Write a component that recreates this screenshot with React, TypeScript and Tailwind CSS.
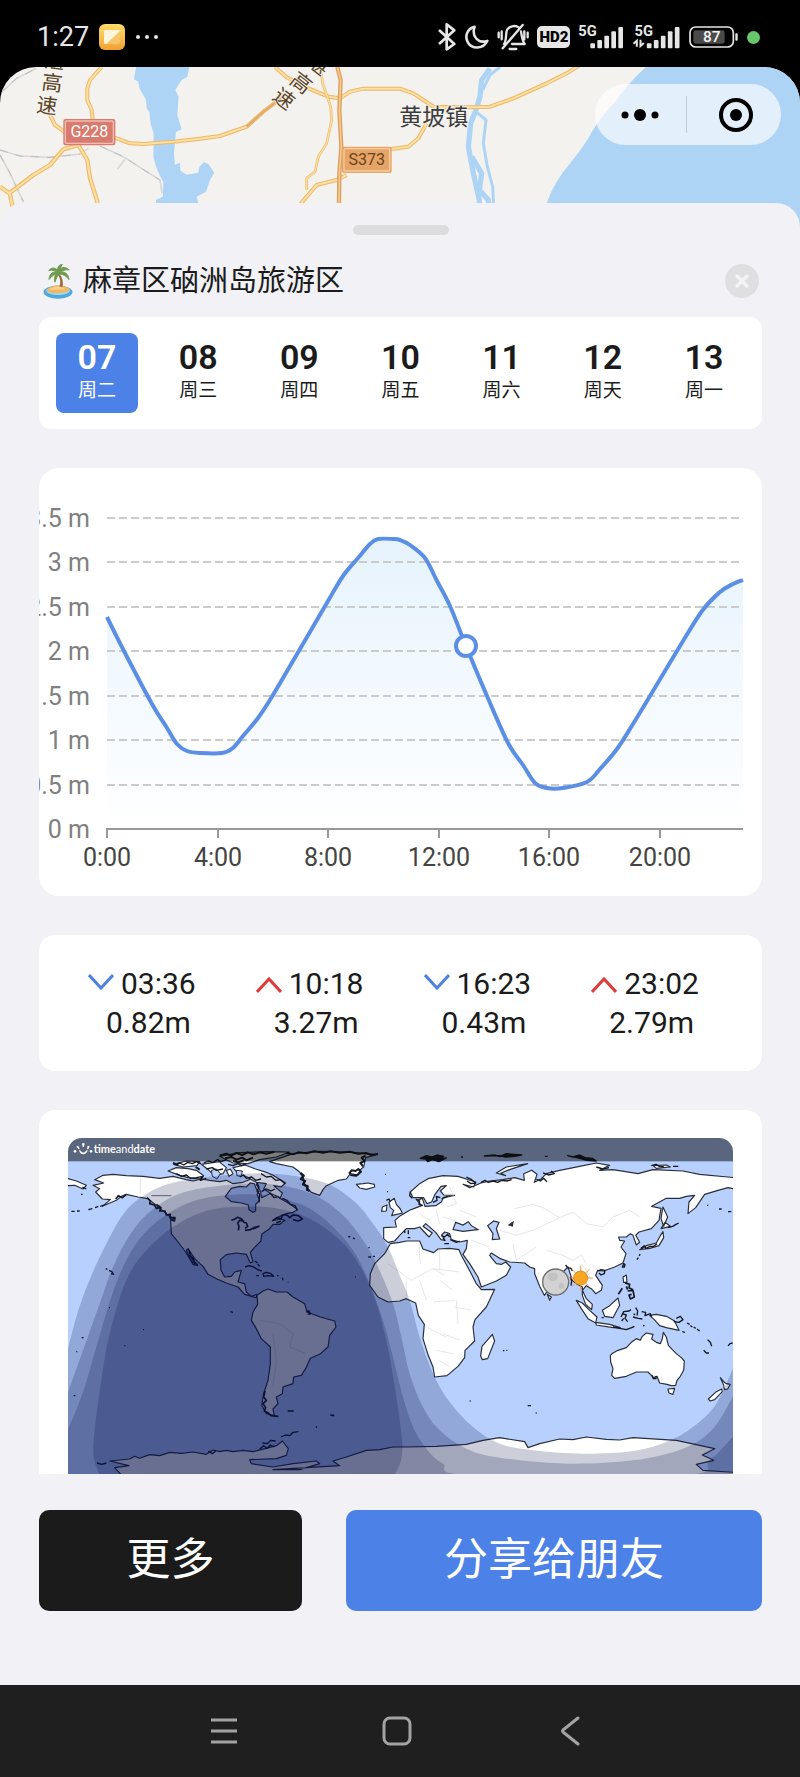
import { useState } from 'react';
import { X } from 'lucide-react';

type Point = [number, number];

const DAYS = [
  { date: '07', week: '周二' },
  { date: '08', week: '周三' },
  { date: '09', week: '周四' },
  { date: '10', week: '周五' },
  { date: '11', week: '周六' },
  { date: '12', week: '周天' },
  { date: '13', week: '周一' },
];

const TIDES = [
  { time: '03:36', height: '0.82m', rising: false },
  { time: '10:18', height: '3.27m', rising: true },
  { time: '16:23', height: '0.43m', rising: false },
  { time: '23:02', height: '2.79m', rising: true },
];

const LEVELS = ['0 m', '0.5 m', '1 m', '1.5 m', '2 m', '2.5 m', '3 m', '3.5 m'];
const HOURS = ['0:00', '4:00', '8:00', '12:00', '16:00', '20:00'];

const TIDE_CURVE: Point[] = [
  [68, 149], [86, 185], [113, 236], [128, 260], [138, 276], [148, 283], [161, 285], [183, 285],
  [194, 280], [204, 268], [219, 250], [234, 227], [261, 181], [289, 133], [304, 108], [319, 90],
  [331, 76], [339, 71], [354, 71], [361, 72], [371, 77], [386, 90], [398, 113], [411, 138],
  [427, 178], [448, 228], [469, 275], [484, 297], [496, 315], [508, 320], [524, 320], [548, 314],
  [561, 301], [578, 281], [594, 256], [614, 223], [638, 183], [663, 143], [681, 124], [694, 116], [704, 112],
];

// Twilight bands, from civil twilight down to full night
const NIGHT_BANDS: Point[][] = [
  [[20, 705], [50, 590], [85, 490], [140, 370], [200, 270], [270, 215], [350, 185], [480, 166], [640, 160], [790, 185], [880, 240], [940, 310], [985, 380], [1020, 465], [1050, 540], [1080, 650], [1120, 760], [1170, 845], [1240, 920], [1320, 970], [1420, 990], [1570, 1000], [1720, 992], [1820, 965], [1900, 920], [1970, 850], [2024, 735]],
  [[20, 830], [70, 690], [120, 550], [160, 440], [210, 345], [270, 275], [360, 220], [500, 194], [640, 192], [760, 222], [850, 285], [910, 360], [955, 440], [1000, 550], [1025, 650], [1050, 760], [1090, 860], [1140, 930], [1220, 985], [1320, 1012], [1520, 1030], [1720, 1020], [1870, 985], [1960, 925], [2024, 820]],
  [[20, 940], [70, 815], [110, 680], [150, 545], [190, 440], [240, 355], [310, 290], [400, 243], [500, 225], [620, 225], [730, 255], [810, 310], [880, 390], [930, 490], [970, 600], [1000, 710], [1030, 830], [1060, 920], [1100, 985], [1150, 1030], [1230, 1064], [1870, 1064], [1950, 1020], [2024, 945]],
  [[120, 1064], [102, 1010], [105, 930], [125, 780], [150, 640], [200, 480], [260, 390], [340, 320], [430, 275], [520, 260], [640, 262], [740, 290], [830, 350], [890, 420], [940, 520], [980, 660], [1010, 830], [1027, 960], [1024, 1020], [1005, 1064]],
];

function smoothPath(points: Point[]) {
  let d = `M${points[0][0]} ${points[0][1]}`;
  for (let i = 0; i < points.length - 1; i++) {
    const p0 = points[i - 1] ?? points[i];
    const p1 = points[i];
    const p2 = points[i + 1];
    const p3 = points[i + 2] ?? p2;
    d += ` C${p1[0] + (p2[0] - p0[0]) / 6} ${p1[1] + (p2[1] - p0[1]) / 6} ${p2[0] - (p3[0] - p1[0]) / 6} ${p2[1] - (p3[1] - p1[1]) / 6} ${p2[0]} ${p2[1]}`;
  }
  return d;
}

function SignalBars() {
  return (
    <g fill="#e6e6e6">
      <rect x="0" y="50" width="14" height="15" rx="3" />
      <rect x="21" y="40" width="14" height="25" rx="3" />
      <rect x="42" y="27" width="14" height="38" rx="3" />
      <rect x="63" y="14" width="14" height="51" rx="3" />
      <rect x="84" y="1" width="14" height="64" rx="3" />
    </g>
  );
}

function StatusBar() {
  return (
    <header className="flex h-[67px] items-center justify-between bg-black pt-[7px] pr-10 pl-[37px] text-[#e6e6e6]">
      <div className="flex items-center gap-[10px]">
        <span className="text-[27px] leading-8">1:27</span>
        <svg viewBox="0 0 26 26" className="size-[26px]">
          <defs>
            <linearGradient id="note" x1="0" y1="0" x2="0" y2="1">
              <stop offset="0" stopColor="#ffdc6a" />
              <stop offset="1" stopColor="#f2a134" />
            </linearGradient>
          </defs>
          <rect width="26" height="26" rx="6" fill="url(#note)" />
          <rect x="5" y="6" width="16" height="14" rx="2" fill="#f8c66a" />
          <path d="M5 7a1 1 0 0 1 1-1h14a1 1 0 0 1 1 1L7 20H6a1 1 0 0 1-1-1z" fill="#fff6dd" />
        </svg>
        <svg viewBox="0 0 24 6" className="h-[6px] w-6" fill="#e6e6e6">
          <circle cx="3" cy="3" r="2" />
          <circle cx="12" cy="3" r="2" />
          <circle cx="21" cy="3" r="2" />
        </svg>
      </div>

      <div className="flex items-center gap-2">
        <svg viewBox="114 66 58 90" className="h-[30px] w-5" fill="none" stroke="#e6e6e6" strokeWidth="8" strokeLinejoin="round">
          <path d="M119 90 L165 132 L142 148 L142 73 L165 91 L119 132" />
        </svg>
        <svg viewBox="200 66 75 90" className="h-[30px] w-6" fill="none" stroke="#e6e6e6" strokeWidth="8" strokeLinejoin="round">
          <path d="M230 79 C207 85 198 108 209 128 C221 150 258 150 270 123 C240 133 220 108 230 79 Z" />
        </svg>
        <svg viewBox="305 66 96 90" className="h-[30px] w-8" fill="none" stroke="#e6e6e6" strokeWidth="7" strokeLinecap="round" strokeLinejoin="round">
          <path d="M326 132 C335 122 330 96 336 88 C345 76 362 76 370 82 M377 94 C380 112 380 120 388 132 H350 M322 145 L382 75 M343 147 H363 M310 98 V112 M319 94 V118 M387 94 V118 M397 98 V112" />
        </svg>
        <svg viewBox="0 0 33 30" className="h-[30px] w-[33px]">
          <rect x="0" y="4" width="33" height="22" rx="5" fill="#e6e6e6" />
          <text x="17" y="20" fontSize="15" fontWeight="900" textAnchor="middle" fill="#000">HD2</text>
        </svg>
        <svg viewBox="534 66 138 90" className="h-[30px] w-[46px]">
          <text x="535" y="107" fontSize="44" fontWeight="700" fill="#e6e6e6">5G</text>
          <g transform="translate(571 80)"><SignalBars /></g>
        </svg>
        <svg viewBox="694 66 146 90" className="h-[30px] w-[49px]">
          <text x="701" y="107" fontSize="44" fontWeight="700" fill="#e6e6e6">5G</text>
          <path d="M708 140 V122 L698 131 M719 119 V138 L729 129" fill="none" stroke="#e6e6e6" strokeWidth="6" />
          <g transform="translate(738 80)"><SignalBars /></g>
        </svg>
        <svg viewBox="866 66 150 90" className="h-[30px] w-[50px]">
          <rect x="869" y="81" width="130" height="60" rx="17" fill="none" stroke="#e6e6e6" strokeWidth="5" />
          <rect x="879" y="91" width="94" height="40" rx="7" fill="#4a4a4a" />
          <rect x="1005" y="100" width="7" height="22" rx="3" fill="#e6e6e6" />
          <text x="934" y="127" fontSize="46" fontWeight="500" textAnchor="middle" fill="#f2f2f2">87</text>
        </svg>
        <span className="size-[13px] rounded-full bg-[#66c76c]" />
      </div>
    </header>
  );
}

function Road({ d, width = 12 }: { d: string; width?: number }) {
  return (
    <>
      <path d={d} fill="none" stroke="#eeb765" strokeWidth={width} strokeLinejoin="round" />
      <path d={d} fill="none" stroke="#fbe0a3" strokeWidth={width / 2} strokeLinejoin="round" />
    </>
  );
}

function AreaMap() {
  return (
    <svg viewBox="0 201 2400 480" preserveAspectRatio="xMidYMin slice" className="h-40 w-full rounded-t-[36px] bg-[#f3f2ee]">
      <g fill="#aed4f5">
        <path d="M408 201 L402 238 415 245 418 265 438 300 440 325 448 335 452 372 461 400 460 470 468 500 480 528 490 545 488 590 468 600 466 700 620 700 590 590 618 575 630 540 643 518 625 492 612 486 598 500 595 518 560 524 541 512 540 488 525 494 522 460 528 396 545 388 532 345 536 290 526 270 545 240 562 230 568 201Z" />
        <path d="M1938 201 C1900 235 1870 270 1845 305 C1810 345 1785 375 1765 415 C1730 470 1700 500 1680 530 C1660 560 1645 590 1630 640 L1620 700 H2400 V201Z" />
      </g>

      {/* River */}
      <g fill="none" stroke="#aed4f5" strokeLinejoin="round">
        <path d="M1470 206 L1445 240 L1440 290 L1428 330 L1412 370 L1405 440 L1420 520 L1438 600 L1440 690" strokeWidth="16" />
        <path d="M1500 201 L1470 225 L1448 270 M1428 335 L1458 360 L1450 430 L1462 500 L1478 560 L1485 690" strokeWidth="9" />
        <path d="M1415 470 L1445 520 L1438 570 L1465 600 L1475 690" strokeWidth="16" />
      </g>

      {/* Railways */}
      <g fill="none" stroke="#d8d8da" strokeWidth="5">
        <path d="M0 280 L50 235 L110 205 M0 450 L60 468 L150 472 L240 462 L265 445 M0 465 L30 520 L70 605 M300 438 L370 470 L440 515 L480 540 L486 580 M375 478 L352 508" />
      </g>
      <g fill="none" stroke="#b9bcc2" strokeWidth="3" strokeDasharray="24 24">
        <path d="M0 280 L50 235 L110 205 M0 450 L60 468 L150 472 L240 462 M0 465 L30 520 L70 605 M300 438 L370 470 L440 515 L480 540" />
      </g>

      <Road d="M305 201 L270 240 L262 265 L262 300 L275 330 L278 360" />
      <Road d="M150 345 L165 375 L200 400 L350 415 L390 430 L430 432 L520 425 L600 416 L660 408 L740 380 L790 335 L850 290" />
      <Road d="M0 560 L28 580 L100 525 L150 495 L190 448 L235 435 L262 480 L270 535 L292 605 L300 700 M28 575 L42 640" width={13} />
      <Road d="M825 201 L860 232 L925 265 L985 290 L1020 295 L1050 275 L1090 266 L1200 266 L1240 280 L1270 300 L1300 320 L1410 322 L1470 320 L1540 295 L1640 250 L1700 220 L1740 195" />
      <Road d="M1280 370 L1255 415 L1225 440 L1170 448" />
      <Road d="M1040 525 L1010 540 L950 555 L920 590 L895 620" />
      <Road d="M960 201 L968 250 L992 320 L995 360 L980 430 L955 470 L945 515 L920 535 L920 570" width={8} />
      <path d="M1012 201 L1022 240 L1018 330 L1024 440 L1018 520 L1016 690" fill="none" stroke="#dca160" strokeWidth="13" />
      <path d="M1012 201 L1022 240 L1018 330 L1024 440 L1018 520 L1016 690" fill="none" stroke="#f4c88e" strokeWidth="5" />
      <path d="M740 380 L790 335 L850 290" fill="none" stroke="#dfa868" strokeWidth="6" />

      <g fontSize="62" fill="#5b4527" stroke="#f3f2ee" strokeWidth="5" paintOrder="stroke" textAnchor="middle">
        <text transform="translate(161 205) rotate(7)">湛</text>
        <text transform="translate(154 271) rotate(7)">高</text>
        <text transform="translate(138 339) rotate(7)">速</text>
        <text transform="translate(942 212) rotate(38)">湛</text>
        <text transform="translate(890 266) rotate(38)">高</text>
        <text transform="translate(838 314) rotate(38)">速</text>
      </g>
      <text x="1198" y="375" fontSize="69" fill="#3c3c3c" stroke="#f3f2ee" strokeWidth="6" paintOrder="stroke">黄坡镇</text>

      <rect x="190" y="357" width="156" height="79" rx="6" fill="#d97a6e" />
      <rect x="196" y="363" width="144" height="67" rx="3" fill="none" stroke="#f1beb4" strokeWidth="4" />
      <text x="268" y="412" fontSize="48" textAnchor="middle" fill="#fff">G228</text>
      <rect x="1026" y="440" width="149" height="79" rx="6" fill="#e5a468" />
      <rect x="1032" y="446" width="137" height="67" rx="3" fill="none" stroke="#f5cd9c" strokeWidth="4" />
      <text x="1100" y="496" fontSize="48" textAnchor="middle" fill="#6c4316">S373</text>
    </svg>
  );
}

function Capsule() {
  return (
    <div className="absolute top-[17px] right-[19px] flex h-[61px] w-[186px] items-center rounded-full bg-white/65">
      <button aria-label="更多操作" className="flex flex-1 items-center justify-center">
        <svg viewBox="0 0 38 12" className="h-3 w-[38px]">
          <circle cx="4" cy="6" r="3.5" />
          <circle cx="19" cy="6" r="6" />
          <circle cx="34" cy="6" r="3.5" />
        </svg>
      </button>
      <span className="h-[37px] w-px bg-black/15" />
      <button aria-label="关闭小程序" className="flex flex-1 items-center justify-center pl-1">
        <svg viewBox="0 0 36 36" className="size-9">
          <circle cx="18" cy="18" r="15" fill="none" stroke="#000" strokeWidth="4" />
          <circle cx="18" cy="18" r="6" />
        </svg>
      </button>
    </div>
  );
}

function IslandIcon() {
  return (
    <svg viewBox="130 135 90 106" className="h-[35px] w-[30px] shrink-0">
      <ellipse cx="175" cy="220" rx="44" ry="20" fill="#4fa9dc" />
      <ellipse cx="175" cy="216" rx="36" ry="13" fill="#9bdcf0" />
      <path d="M140 215 C155 195 200 193 212 214 C200 226 152 227 140 215Z" fill="#f2b765" />
      <path d="M148 213 C165 200 185 200 196 212Z" fill="#f9cf86" />
      <path d="M176 160 C187 172 192 188 189 204 L180 204 C184 188 181 174 172 164Z" fill="#9a6a3d" />
      <path d="M178 160 C170 145 156 143 147 155 C158 152 167 155 176 162Z M178 160 C162 155 148 164 148 182 C156 170 166 165 178 164Z M178 160 C180 145 195 140 209 153 C197 151 188 154 179 163Z M178 160 C194 156 207 164 208 182 C200 170 190 166 178 165Z M174 158 C172 145 178 137 188 136 C182 144 182 152 180 162Z M176 160 C165 166 162 178 166 190 C169 178 174 171 180 164Z" fill="#6f9c4e" stroke="#6f9c4e" strokeWidth="3" />
    </svg>
  );
}

function TideChart() {
  const curve = smoothPath(TIDE_CURVE);
  return (
    <svg viewBox="0 0 723 428" className="block w-full" role="img" aria-label="潮汐曲线">
      <defs>
        <linearGradient id="tide" x1="0" y1="0" x2="0" y2="1">
          <stop offset="0" stopColor="#e6f3fd" />
          <stop offset="1" stopColor="#ffffff" />
        </linearGradient>
      </defs>
      <path d={`${curve} L704 361 L68 361Z`} fill="url(#tide)" />
      {LEVELS.map((label, i) => {
        const y = Math.round(361 - (i * 311) / 7);
        return (
          <g key={label}>
            {i > 0 && <line x1="68" x2="704" y1={y} y2={y} stroke="#cbcbcb" strokeWidth="2" strokeDasharray="8 4" />}
            <text x="51" y={y + 9} fontSize="25" textAnchor="end" fill="#808080">{label}</text>
          </g>
        );
      })}
      <line x1="67" x2="704" y1="361" y2="361" stroke="#999" strokeWidth="2" />
      {HOURS.map((label, i) => {
        const x = Math.round(68 + i * 110.6);
        return (
          <g key={label}>
            <line x1={x} x2={x} y1="361" y2="370" stroke="#999" strokeWidth="2" />
            <text x={x} y="398" fontSize="25" textAnchor="middle" fill="#444">{label}</text>
          </g>
        );
      })}
      <path d={curve} fill="none" stroke="#5b8fe6" strokeWidth="4" strokeLinejoin="round" />
      <circle cx="427" cy="178" r="10" fill="#fff" stroke="#5b8fe6" strokeWidth="4" />
    </svg>
  );
}

function WorldMap() {
  return (
    <svg viewBox="25 53 1995 1007" className="block w-full rounded-t-[14px]" role="img" aria-label="昼夜分布图">
      <rect x="20" y="50" width="2010" height="1020" fill="#b7d0fd" />

      <g fill="#fff" stroke="#2a2e38" strokeWidth="3.5" strokeLinejoin="round">
        {/* North America */}
        <path d="M105 178 L130 165 160 162 200 166 250 168 300 174 340 168 380 178 400 182 425 176 450 180 480 184 500 180 520 190 550 186 575 176 600 180 590 192 602 212 606 232 628 222 640 208 660 234 690 250 714 268 700 276 680 280 655 290 638 302 662 296 676 300 660 312 640 312 630 325 606 342 604 362 582 384 572 396 580 425 572 428 560 402 530 398 500 403 482 418 484 450 495 470 515 468 525 455 545 450 535 485 555 490 560 515 575 528 592 522 590 532 575 528 555 522 535 500 500 488 470 475 445 462 430 438 405 415 385 385 380 390 398 425 414 436 400 432 378 395 355 365 335 340 333 300 342 296 320 280 290 255 265 235 235 230 200 222 185 228 170 240 128 258 152 238 128 236 108 215 120 205 100 195 132 188Z" />
        <path d="M325 152 L350 142 385 145 410 150 432 166 420 176 385 172 360 165Z M342 132 L380 122 420 124 412 136 370 140Z M425 132 L478 124 500 142 490 160 465 166 448 150Z M500 150 L512 146 520 160 508 168Z M520 142 L556 134 588 146 620 156 640 165 678 188 664 200 642 196 668 218 662 232 635 220 612 206 620 190 590 186 562 170 535 160Z M480 108 L540 97 620 94 690 95 650 110 600 118 565 130 520 128 500 118Z" />
        <path d="M630 124 L700 100 780 93 860 95 950 103 918 112 912 140 902 148 895 164 872 160 860 176 836 180 800 196 790 208 780 225 755 216 740 200 735 190 730 170 720 155 700 140 650 130Z" />
        <path d="M890 192 L910 190 925 188 944 192 945 200 920 207 900 203Z M25 175 L50 182 80 195 70 206 45 195 25 196" />
        {/* South America */}
        <path d="M592 525 L610 512 625 506 650 515 682 515 700 530 735 550 742 575 782 590 825 602 829 620 810 645 805 680 780 702 752 714 738 745 725 765 702 770 700 790 670 800 668 820 650 830 655 850 640 866 644 886 620 880 606 855 612 820 625 780 632 730 632 680 605 655 590 625 575 600 580 575 594 552Z" />
        {/* Africa */}
        <path d="M992 370 L975 400 945 430 932 460 930 495 955 530 985 545 1020 542 1040 535 1068 548 1076 585 1094 612 1090 655 1104 700 1120 740 1125 770 1162 766 1195 738 1215 712 1216 690 1245 662 1240 620 1246 598 1280 560 1305 507 1265 508 1250 490 1232 455 1205 405 1198 388 1170 384 1135 386 1122 397 1090 386 1080 362 1040 362 1020 366Z" />
        {/* Antarctica */}
        <path d="M185 1064 L165 1042 208 1036 150 1022 210 1016 225 1008 240 1014 270 1003 300 1006 330 996 365 999 400 995 440 1002 460 989 480 994 500 990 520 994 550 990 580 994 620 984 652 975 668 962 686 985 680 1005 650 1015 570 1018 575 1030 640 1040 700 1030 770 1022 780 1030 720 1048 640 1048 840 1036 820 1022 860 1010 920 990 960 988 1000 980 1040 980 1130 978 1220 972 1270 960 1320 952 1395 964 1405 982 1440 970 1500 956 1540 958 1580 950 1640 957 1680 959 1720 952 1850 960 1920 975 1965 985 1928 1004 1962 1020 1910 1032 1930 1050 2024 1056 2024 1074 185 1074Z" />
      </g>

      {/* Inner borders drawn thin */}
      <path d="M242 172 V220 M600 600 L660 610 700 640 690 680 740 700 M640 640 L650 720 640 800" fill="none" stroke="#d9d9dd" strokeWidth="2" />
      <path d="M275 226 H335" stroke="#2a2e38" strokeWidth="2" />

      {/* Hudson Bay and the Great Lakes */}
      <path d="M497 228 L515 204 540 198 560 200 572 188 584 190 590 206 598 214 592 222 600 240 588 252 588 272 580 276 568 268 566 254 545 248 515 244Z" fill="#b7d0fd" stroke="#2a2e38" strokeWidth="3.5" />
      <path d="M455 150 L470 146 482 160 472 176 458 168Z M530 150 L548 152 545 168 532 166Z" fill="#b7d0fd" stroke="#2a2e38" strokeWidth="3" />
      <path d="M515 300 L526 296 534 291 545 295 551 302 540 300 534 308 538 318 536 330 M550 305 L560 308 564 318 556 324 M556 330 L572 328 582 322 598 318 580 326" fill="none" stroke="#1c2028" strokeWidth="5" strokeLinejoin="round" />

      <g transform="translate(1020 0)">
        <g fill="#fff" stroke="#2a2e38" strokeWidth="3.5" strokeLinejoin="round">
          {/* Eurasia */}
          <path d="M-48 322 L-10 320 -14 300 2 286 30 270 50 262 66 256 52 240 68 234 76 258 108 256 126 244 130 232 165 225 132 224 122 212 140 196 124 198 106 222 96 245 82 250 72 232 40 232 32 215 60 190 85 175 130 166 175 168 228 185 222 200 190 192 210 202 244 188 270 182 310 178 345 172 374 180 372 160 396 150 412 162 404 186 424 176 440 160 480 150 540 138 590 128 630 135 600 150 640 148 715 160 760 148 850 152 900 162 1004 172 1004 206 985 202 955 210 915 222 888 262 865 280 868 245 885 225 860 228 840 234 800 234 756 258 784 264 778 300 755 325 718 335 708 345 720 366 710 374 700 345 692 340 680 350 657 350 660 360 675 362 664 380 679 400 670 428 645 440 612 452 594 450 588 465 608 495 605 510 588 520 575 505 560 496 548 510 560 535 578 552 576 568 558 552 548 525 548 500 530 490 518 480 505 440 490 455 460 480 445 510 434 525 420 498 405 460 405 445 390 440 375 428 330 425 300 414 275 398 270 405 290 430 306 432 318 425 333 440 320 465 290 482 245 500 235 470 210 430 190 402 200 385 203 360 180 365 155 358 150 340 135 335 126 344 136 360 124 358 108 336 92 322 78 310 70 318 98 338 88 350 60 320 45 325 20 325 0 345 -15 362 -35 366 -48 355Z" />
          <path d="M-32 246 L-16 234 -10 252 2 266 8 278 -24 286 -18 270 -28 262Z M-52 260 L-38 254 -40 272 -54 273Z" />
          <path d="M290 158 L320 140 384 130 330 148 304 158 318 166Z M760 136 L800 134 812 140 770 144Z" />
          <path d="M278 642 L285 662 264 715 248 718 243 706 247 678Z M443 522 L455 530 450 540Z" />
          {/* Australia and New Zealand */}
          <path d="M632 705 L640 698 655 690 680 682 695 666 710 655 722 660 728 648 740 638 760 642 756 656 770 666 782 670 788 655 791 636 800 650 806 675 818 688 830 700 845 712 854 722 852 750 842 768 832 780 828 795 815 796 802 792 780 788 772 768 762 772 745 755 710 755 680 768 645 774 636 765 640 745 633 725Z" />
          <path d="M805 806 L825 804 820 822 808 818Z M962 772 L974 786 980 790 992 792 984 806 974 808 972 794Z M926 836 L950 814 966 806 968 814 945 838 932 842Z" />
          {/* South-east Asia and Japan */}
          <path d="M530 540 L548 548 570 570 592 590 588 608 565 595 545 565Z M588 606 L630 612 662 622 640 622 590 614Z M608 570 L630 556 655 533 660 555 640 592 615 588Z M750 585 L770 582 800 588 825 602 838 630 800 622 780 616 764 598Z M670 470 L680 464 682 486 672 486Z M720 388 L740 376 770 368 782 346 790 334 792 352 778 376 750 384Z M784 325 L796 306 812 318Z M790 260 L804 290 792 318 784 294Z" />
        </g>
        <g fill="#b7d0fd" stroke="#2a2e38" strokeWidth="3.5">
          <path d="M160 328 L168 306 190 314 206 304 215 316 235 328 190 333Z M264 316 L282 302 298 306 290 325 300 356 278 358 280 340Z" />
          <path d="M328 314 L340 305 338 317Z" fill="#2a2e38" />
        </g>
        <path d="M-35 430 L35 480 100 445 135 465 M58 375 L62 430 M100 445 L180 455 M120 390 V450 M20 480 V530 M120 480 L160 510 M60 480 L80 540 M100 545 L165 540 M170 540 L175 610 M165 560 L215 570 M130 640 L180 660 M80 620 L140 650 M110 690 L160 700 M118 720 L150 740 M215 360 L270 380 M345 265 L400 252 430 262 480 292 520 275 560 310 610 320 640 290 690 270 720 290 M300 330 L350 345 400 330 480 292 M340 370 L350 420 410 380 M440 390 L490 405 520 420 545 405 560 430 M545 430 L560 450 575 480 M110 270 L120 310 M60 280 L90 300 M140 260 L170 250 150 200 M180 270 L230 290 M130 290 L165 300" fill="none" stroke="#d9d9dd" strokeWidth="2" />

        {/* Small islands and rugged coasts */}
        <g fill="none" stroke="#15181f" strokeWidth="4" strokeLinejoin="round">
          <path d="M62 114 L80 106 96 110 112 104 132 108 120 116 140 113 118 124 98 118 84 124 78 116Z M254 107 L285 104 300 109 320 100 345 102 366 104 340 109 318 110 300 106 Z M504 106 L520 110 540 104 556 112 578 114 590 122 562 120 540 114Z" fill="#15181f" />
          <path d="M184 110 h6 M436 108 h8 M200 170 l16 8 12 10 -14 2 -12 -8 M244 186 l12 -6 10 6 14 -4 14 4 12 -6 16 2 14 -4 M410 176 l12 6 10 -8 10 10 M430 158 l16 6 18 -4 -10 -8 M590 140 l20 6 18 -4 M755 136 l14 -4 10 6 14 2 M820 138 h16" />
          <path d="M664 590 L672 574 688 572 694 568 M668 580 L680 584 676 594 684 604 M666 602 L672 594 M708 562 L714 572 712 586 M702 580 L706 584 M726 574 L738 576 736 586 752 580 756 590 M700 590 L716 594 728 596 M640 620 L660 624 680 628 696 622 704 618 M606 592 h6 M730 616 h5" />
          <path d="M676 488 L690 492 688 502 700 508 M680 498 L684 508 M656 522 L668 504 M684 512 L700 510 704 530 692 536 688 524 696 522" strokeWidth="5" />
          <path d="M830 594 L842 588 850 598 838 606 822 604 M862 608 l8 4 M872 616 l6 4 M882 620 l6 4 M892 626 l8 6 M924 658 l8 8 4 12 M912 690 l8 8 8 0 M985 676 l6 -6 8 -2 M848 634 l8 2 M805 322 l14 -4 10 -6 8 -4 M596 452 l8 -4 12 2 -2 10 -10 4 -6 -6 M668 440 l4 -10 4 2 -2 8 Z M712 418 l4 -6 M718 406 l4 -4 M384 856 h10 M408 878 h3 M210 842 h3 M310 692 l4 -2 M320 690 h3 M498 434 l6 8 10 2 4 8 M512 470 l4 12 -2 14 M757 765 l4 10 8 0 0 -8 M724 384 l10 -8 4 8 14 -6 10 0 10 -8 M922 255 h4 M958 266 h8 M985 274 h10" />
          <path d="M32 214 L30 226 38 234 M48 236 L60 242 58 252 70 256 M100 246 L112 240 110 228 122 232 M126 236 L144 228 M125 346 L134 350 144 342 150 350 M130 352 L136 362 M134 370 h14 M152 358 L170 366 180 362 M15 328 v10 M26 330 v12 M24 352 h8 M-40 240 L-32 236 -28 244" />
        </g>
      </g>

      <g fill="none" stroke="#15181f" strokeWidth="4" strokeLinejoin="round">
        <path d="M35 273 h10 M52 272 h8 M86 268 l12 -3 M106 262 l10 -4 M122 258 l10 -4 M64 222 h5 M68 200 l12 6" />
        <path d="M168 236 L176 226 188 232 200 222 M262 232 L272 242 270 250 284 254 290 264 300 262 M290 252 L304 262 300 272 316 272 320 284 332 282 330 292 346 292 344 302 332 296" strokeWidth="5" />
        <path d="M385 386 L392 398 390 406 402 414 404 424 414 434 M388 394 L396 412 406 430" />
        {/* Arctic archipelago */}
        <path d="M345 132 L360 128 372 134 384 126 398 130 410 124 424 130 M350 160 L366 168 380 164 392 174 410 172 430 168 422 180 440 174 M432 128 L446 122 460 126 474 118 484 124 500 118 M440 146 L458 142 470 150 490 146 M505 132 L520 136 534 130 546 136 560 130 M540 170 L552 164 560 174 576 170 588 180 604 176 M604 160 L620 170 634 168 648 180 662 178 676 190" />
        <path d="M480 106 L500 100 514 106 530 98 548 104 564 96 582 102 600 96 620 100 644 94 M496 114 L516 110 530 118 548 112 560 120 580 112 M520 122 L536 126 552 120 M340 128 L356 134 M408 140 L420 148" strokeWidth="6" />
        <path d="M680 98 L700 102 716 96 740 99 764 93 790 97 812 93 840 97 870 94 896 100 918 98 936 104 955 101 M918 106 L906 112 914 122 902 128 910 138 M868 160 L876 150 888 152 896 146 904 154 890 166 872 164" strokeWidth="6" />
        <path d="M722 158 L732 166 724 176 736 182 730 192 744 198 742 208 750 212" strokeWidth="7" />
        <path d="M592 188 L598 200 592 212 600 222 598 246 M606 214 L618 206 634 212 646 206 M630 218 L644 232 656 228 M668 234 L682 240 692 252 706 256 712 268" />
        <path d="M640 300 L652 292 664 296 668 284 682 284 690 292 700 284 716 286 728 296 716 302 700 298 M650 308 L664 302" strokeWidth="5" />
        {/* Caribbean */}
        <path d="M556 440 L568 436 582 440 594 448 606 452 M610 460 L620 456 634 460 642 468 626 466 612 468Z M590 466 h8 M652 466 h5 M586 422 l8 6 M594 432 l6 6 M668 472 l2 8 M684 486 h2" />
        <path d="M138 446 h5 M148 450 l8 4 6 8 -8 -2 M512 574 l8 2 M148 562 h3 M66 652 h6 M50 694 h3 M42 826 h5 M250 628 h3 M194 676 h3 M976 162 h3 M982 214 h3 M866 350 l6 -2 M880 352 l5 4 M926 382 h4 M926 410 h8 M940 408 h6 M886 470 h2 M740 575 l8 -4 4 10 -8 0" />
        {/* Tierra del Fuego and the Antarctic Peninsula */}
        <path d="M616 812 L612 830 620 840 610 850 618 862 614 872 626 878 634 886 656 888 M684 872 h18 M812 884 l12 2 M768 920 h4" strokeWidth="5" />
        <path d="M600 986 L612 976 622 984 632 974 644 980 M608 968 L622 970 634 960 648 962 M664 950 L678 944 690 946 700 936 716 934 M112 1028 L126 1032 140 1028 M446 992 l12 8 10 -8" strokeWidth="4" />
      </g>

      {NIGHT_BANDS.map((band, i) => (
        <path key={i} d={`${smoothPath(band)} ${i < 3 ? 'V1070 H20' : ''}Z`} fill="#070d4b" fillOpacity="0.205" />
      ))}

      {/* Moon and sun */}
      <circle cx="1488" cy="485" r="39" fill="#d2d2d2" stroke="#6d6d6d" strokeWidth="4" />
      <path d="M1462 468 C1475 450 1498 455 1494 472 C1488 486 1468 486 1462 468Z M1498 490 C1508 480 1518 492 1510 504 C1498 508 1494 500 1498 490Z" fill="#c2c2c2" />
      <path d="M1563 436 V510 M1526 473 H1600 M1537 447 L1589 499 M1589 447 L1537 499" stroke="#ef9a5c" strokeWidth="3" />
      <circle cx="1563" cy="473" r="21" fill="#f7a823" stroke="#e58a1e" strokeWidth="3" />

      {/* Attribution bar */}
      <rect x="20" y="50" width="2010" height="73" fill="#05070c" fillOpacity="0.53" />
      <g fill="#fff">
        <path d="M58 88 C60 106 82 106 84 88 L78 92 C76 98 66 98 64 92Z" />
        <circle cx="46" cy="93" r="4" />
        <path d="M50 78 L56 76 60 86 56 86Z M67 69 H75 L73 80 H69Z M84 76 L90 78 86 87 82 86Z" />
        <circle cx="94" cy="93" r="4" />
        <text x="102" y="97" fontSize="33" className="font-[family-name:Lato,sans-serif]">
          <tspan fontWeight="700">time</tspan>
          <tspan fontWeight="400">and</tspan>
          <tspan fontWeight="700">date</tspan>
        </text>
      </g>
    </svg>
  );
}

function NavBar() {
  return (
    <nav className="flex h-[92px] items-center justify-center gap-[144px] bg-[#1f1f1f] pr-1 text-[#a3a3a3]">
      <button aria-label="最近任务">
        <svg viewBox="0 0 28 30" className="h-[30px] w-7" stroke="currentColor" strokeWidth="3">
          <path d="M1 4H27M1 15H27M1 26H27" />
        </svg>
      </button>
      <button aria-label="主屏幕">
        <svg viewBox="0 0 30 30" className="size-[30px]" fill="none" stroke="currentColor" strokeWidth="3">
          <rect x="2" y="2" width="26" height="26" rx="6" />
        </svg>
      </button>
      <button aria-label="返回">
        <svg viewBox="0 0 30 30" className="size-[30px]" fill="none" stroke="currentColor" strokeWidth="3" strokeLinecap="round" strokeLinejoin="round">
          <path d="M22 2L7 14Q6 15 7 16L22 28" />
        </svg>
      </button>
    </nav>
  );
}

export default function App() {
  const [selected, setSelected] = useState('07');

  return (
    <div className="flex min-h-screen w-full flex-col bg-black font-[family-name:Roboto,'Noto_Sans_CJK_SC',sans-serif] text-[#1b1b1b]">
      <StatusBar />

      <div className="relative">
        <AreaMap />
        <Capsule />
      </div>

      <main className="relative -mt-6 flex flex-1 flex-col rounded-t-3xl bg-[#f1f1f6] pt-[22px] pr-[38px] pl-[39px]">
        <div className="mx-auto h-[10px] w-24 rounded-full bg-[#dcdcde]" />

        <div className="mt-6 flex h-11 items-center justify-between pr-[3px] pl-1">
          <div className="flex items-center gap-[10px]">
            <IslandIcon />
            <h1 className="text-[29px] leading-10">麻章区硇洲岛旅游区</h1>
          </div>
          <button aria-label="关闭" className="flex size-[34px] items-center justify-center rounded-full bg-[#dfdfe1] text-[#f4f4f6]">
            <X size={20} strokeWidth={4} />
          </button>
        </div>

        {/* Day picker */}
        <div className="mt-[14px] flex justify-between rounded-xl bg-white px-[17px] py-4">
          {DAYS.map(day => (
            <button
              key={day.date}
              onClick={() => setSelected(day.date)}
              className={`flex h-20 w-[82px] flex-col items-center justify-center gap-1 rounded-lg ${
                selected === day.date ? 'bg-[#4c82e8] text-white' : ''
              }`}
            >
              <span className="text-[34px] leading-8 font-semibold">{day.date}</span>
              <span className="text-[19px] leading-7">{day.week}</span>
            </button>
          ))}
        </div>

        <section className="mt-[39px] overflow-hidden rounded-[20px] bg-white">
          <TideChart />
        </section>

        {/* High and low tides */}
        <section className="mt-[39px] grid grid-cols-4 rounded-2xl bg-white px-[26px] py-[29px]">
          {TIDES.map(tide => (
            <div key={tide.time} className="pl-[23px] text-[30px] leading-[39px]">
              <div className="flex items-center gap-[7px]">
                <svg viewBox="0 0 26 26" className="size-[26px]" fill="none" strokeWidth="3">
                  {tide.rising
                    ? <path d="M1 21L13 8L25 21" stroke="#dd3c3a" />
                    : <path d="M1 4L13 17L25 4" stroke="#4c82e0" />}
                </svg>
                <span>{tide.time}</span>
              </div>
              <div className="pl-[18px]">{tide.height}</div>
            </div>
          ))}
        </section>

        <section className="mt-[39px] rounded-t-2xl bg-white px-[29px] pt-7">
          <WorldMap />
        </section>

        <div className="flex gap-11 pt-9 pb-[73px]">
          <button className="h-[101px] flex-[263] rounded-[10px] bg-[#1b1b1b] text-[44px] text-white">更多</button>
          <button className="h-[101px] flex-[416] rounded-[10px] bg-[#4c82e8] text-[44px] text-white">分享给朋友</button>
        </div>
      </main>

      <NavBar />
    </div>
  );
}
